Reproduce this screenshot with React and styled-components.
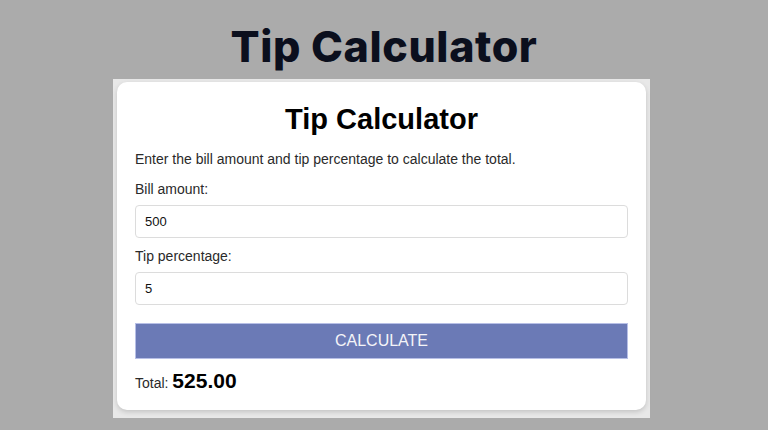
import React, { useState } from "react";
import styled, { createGlobalStyle } from "styled-components";

const GlobalStyle = createGlobalStyle`
  html, body {
    margin: 0;
    padding: 0;
    background: #ababab;
  }
  * { box-sizing: border-box; }
`;

const Page = styled.main`
  display: flex;
  flex-direction: column;
  align-items: center;
  width: 768px;
  height: 430px;
  overflow: hidden;
`;

const Heading = styled.h1`
  margin: 0;
  padding-top: 20px;
  height: 79px;
  font-family: Inter, "Open Sans", sans-serif;
  font-weight: 800;
  font-size: 43px;
  line-height: 52px;
  color: #0b0f1d;
  letter-spacing: 0.6px;
`;

const Frame = styled.section`
  width: 537px;
  height: 339px;
  margin-right: 5px;
  background: #e8e8e8;
  padding: 3px 4px 8px 4px;
`;

const Card = styled.div`
  background: #ffffff;
  border-radius: 10px;
  box-shadow: 0 2px 5px rgba(0, 0, 0, 0.16);
  padding: 21px 18px 13px 18px;
  height: 100%;
  font-family: "Liberation Sans", Arial, sans-serif;
  color: #2a2a2a;
`;

const CardTitle = styled.h2`
  margin: 0 0 15px 0;
  text-align: center;
  font-size: 29px;
  line-height: 32px;
  font-weight: 700;
  color: #000;
`;

const Intro = styled.p`
  margin: 1px 0 11px 0;
  font-size: 14px;
  line-height: 18px;
`;

const Label = styled.label`
  display: block;
  font-size: 14px;
  line-height: 18px;
  padding-top: 1px;
  margin-bottom: 7px;
`;

const Field = styled.input`
  display: block;
  width: 100%;
  height: 33px;
  border: 1px solid #dcdcdc;
  border-radius: 4px;
  padding: 0 9px;
  font-family: "Liberation Sans", Arial, sans-serif;
  font-size: 13px;
  color: #111;
  background: #fff;
  outline: none;
  margin-bottom: ${(p) => p.$gap}px;
`;

const CalcButton = styled.button`
  display: block;
  width: 100%;
  height: 36px;
  border: 1px solid #b7bfe6;
  background: #6b7ab6;
  color: #f4f4f8;
  font-family: "Liberation Sans", Arial, sans-serif;
  font-size: 16px;
  text-transform: uppercase;
  cursor: pointer;
  margin-bottom: 9px;
`;

const Total = styled.div`
  font-size: 14px;
  line-height: 26px;
  color: #2a2a2a;
`;

const Amount = styled.strong`
  font-size: 21px;
  line-height: 26px;
  font-weight: 700;
  color: #000;
`;

export default function App() {
  const [bill, setBill] = useState("500");
  const [tip, setTip] = useState("5");
  const [total, setTotal] = useState(525);

  const calculate = () => {
    const b = parseFloat(bill) || 0;
    const t = parseFloat(tip) || 0;
    setTotal(b + (b * t) / 100);
  };

  return (
    <>
      <GlobalStyle />
      <Page>
        <Heading>Tip Calculator</Heading>
        <Frame>
          <Card>
            <CardTitle>Tip Calculator</CardTitle>
            <Intro>Enter the bill amount and tip percentage to calculate the total.</Intro>
            <Label htmlFor="bill">Bill amount:</Label>
            <Field id="bill" $gap={8} value={bill} onChange={(e) => setBill(e.target.value)} />
            <Label htmlFor="tip">Tip percentage:</Label>
            <Field id="tip" $gap={18} value={tip} onChange={(e) => setTip(e.target.value)} />
            <CalcButton onClick={calculate}>Calculate</CalcButton>
            <Total>
              Total: <Amount>{total.toFixed(2)}</Amount>
            </Total>
          </Card>
        </Frame>
      </Page>
    </>
  );
}
